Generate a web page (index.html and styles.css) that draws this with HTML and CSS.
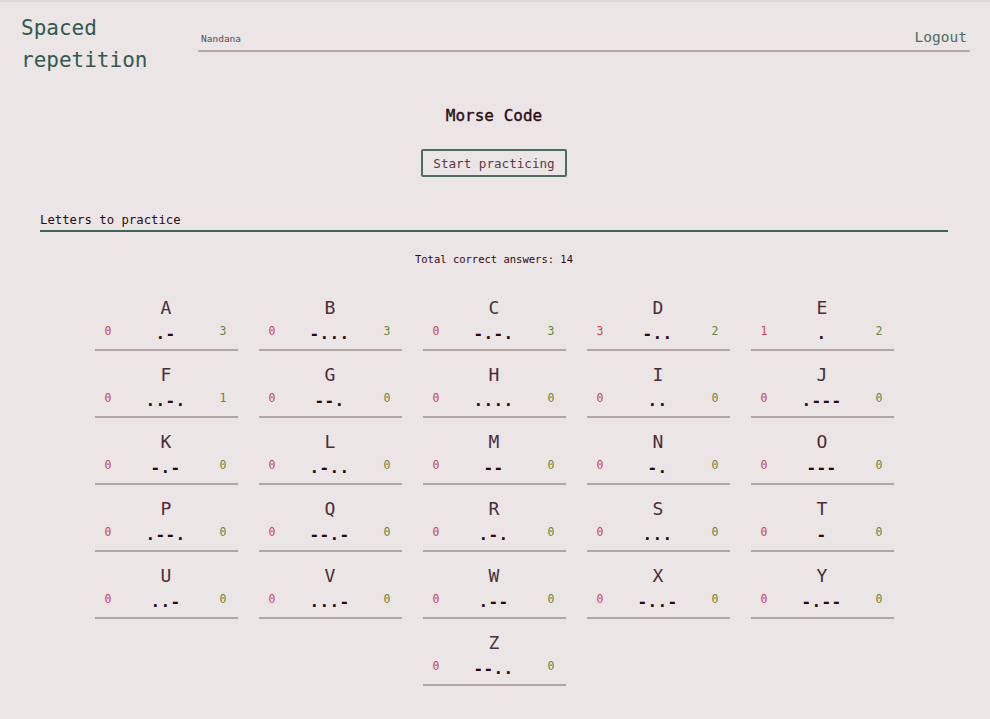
FILE: index.html
```html
<!DOCTYPE html>
<html lang="en">
<head>
<meta charset="utf-8">
<title>Spaced repetition</title>
<link rel="stylesheet" href="styles.css">
</head>
<body>
<header class="header">
  <h1 class="title">Spaced<br>repetition</h1>
  <nav class="nav">
    <span class="user">Nandana</span>
    <a class="logout" href="#">Logout</a>
  </nav>
</header>
<main class="main">
  <h2 class="deck">Morse Code</h2>
  <button class="start">Start practicing</button>
  <section class="letters">
    <h3 class="letters-title">Letters to practice</h3>
    <p class="total">Total correct answers: 14</p>
    <div class="grid" id="grid"></div>
  </section>
</main>
<script>
var data = [
  ["A",".-",0,3],["B","-...",0,3],["C","-.-.",0,3],["D","-..",3,2],["E",".",1,2],
  ["F","..-.",0,1],["G","--.",0,0],["H","....",0,0],["I","..",0,0],["J",".---",0,0],
  ["K","-.-",0,0],["L",".-..",0,0],["M","--",0,0],["N","-.",0,0],["O","---",0,0],
  ["P",".--.",0,0],["Q","--.-",0,0],["R",".-.",0,0],["S","...",0,0],["T","-",0,0],
  ["U","..-",0,0],["V","...-",0,0],["W",".--",0,0],["X","-..-",0,0],["Y","-.--",0,0],
  ["Z","--..",0,0]
];
var g = document.getElementById("grid");
data.forEach(function (d) {
  var t = document.createElement("div");
  t.className = "tile";
  t.innerHTML = '<div class="letter">' + d[0] + '</div>' +
    '<div class="row"><span class="wrong">' + d[2] + '</span>' +
    '<span class="code">' + d[1] + '</span>' +
    '<span class="right">' + d[3] + '</span></div>';
  g.appendChild(t);
});
</script>
</body>
</html>
```
FILE: styles.css
```css
html, body {
  margin: 0;
  padding: 0;
}
body {
  background: #ebe5e5;
  border-top: 2px solid #dcd6d6;
  font-family: "DejaVu Sans Mono", "Liberation Mono", monospace;
  color: #2b0a14;
  min-height: 717px;
  box-sizing: border-box;
}
.header {
  display: flex;
  align-items: flex-start;
  padding: 10px 20px 0 21px;
}
.title {
  margin: 0;
  width: 177px;
  font-size: 21px;
  line-height: 32px;
  font-weight: normal;
  color: #305a50;
}
.nav {
  flex: 1;
  display: flex;
  justify-content: space-between;
  align-items: baseline;
  padding: 17px 3px 4px 3px;
  border-bottom: 2px solid #b9a7a5;
}
.user {
  font-size: 9.5px;
  color: #5a4850;
}
.logout {
  font-size: 14.5px;
  line-height: 17px;
  color: #4d6d64;
  text-decoration: none;
}
.main {
  display: flex;
  flex-direction: column;
  align-items: center;
  padding: 30px 42px 20px 40px;
}
.deck {
  margin: 0;
  font-size: 16px;
  line-height: 20px;
  font-weight: normal;
  -webkit-text-stroke: 0.35px #2b0a14;
  color: #2b0a14;
}
.start {
  margin-top: 23px;
  height: 28px;
  padding: 0 10px;
  background: transparent;
  border: 2px solid #4a6e62;
  border-radius: 2px;
  font-family: inherit;
  font-size: 12.6px;
  color: #5c3a45;
}
.letters {
  align-self: stretch;
  display: flex;
  flex-direction: column;
}
.letters-title {
  margin: 36px 0 0 0;
  padding-bottom: 2px;
  border-bottom: 2px solid #3d6659;
  font-size: 12.3px;
  line-height: 15px;
  font-weight: normal;
  color: #2b0a14;
}
.total {
  margin: 21px 0 0 0;
  text-align: center;
  font-size: 10.5px;
  line-height: 13px;
  color: #2b0a14;
}
.grid {
  margin-top: 31px;
  display: flex;
  flex-wrap: wrap;
  justify-content: center;
  column-gap: 21px;
  row-gap: 13px;
  padding: 0 54px;
}
.tile {
  width: 143px;
  border-bottom: 2px solid #b5a6a6;
  padding-bottom: 5px;
}
.letter {
  text-align: center;
  font-size: 18px;
  line-height: 22px;
  color: #4a2e38;
}
.row {
  display: flex;
  justify-content: space-between;
  align-items: flex-start;
  padding: 5px 11px 0 10px;
}
.wrong, .right {
  font-size: 11.5px;
  line-height: 14px;
  width: 12px;
}
.wrong {
  color: #c84652;
}
.right {
  color: #64873a;
  text-align: right;
}
.code {
  font-size: 16px;
  line-height: 20px;
  letter-spacing: 0.4px;
  font-weight: bold;
  color: #2b0a14;
}
```
